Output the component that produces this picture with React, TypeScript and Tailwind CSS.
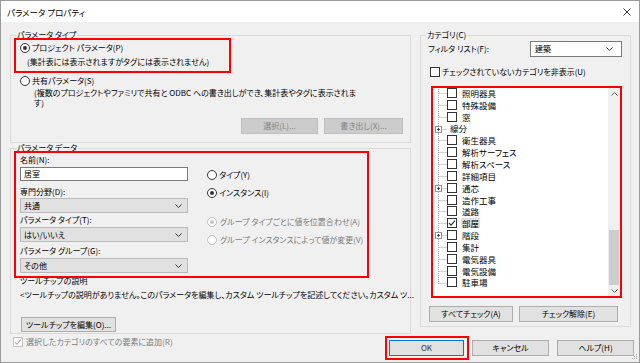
import React from "react";

type Row = { label: string; plus?: boolean; noBox?: boolean; checked?: boolean; last?: boolean };

const categories: Row[] = [
  { label: "照明器具" },
  { label: "特殊設備" },
  { label: "窓" },
  { label: "線分", plus: true, noBox: true },
  { label: "衛生器具" },
  { label: "解析サーフェス" },
  { label: "解析スペース" },
  { label: "詳細項目" },
  { label: "通芯", plus: true },
  { label: "造作工事" },
  { label: "道路" },
  { label: "部屋", checked: true },
  { label: "階段", plus: true },
  { label: "集計" },
  { label: "電気器具" },
  { label: "電気設備" },
  { label: "駐車場", last: true },
];

function Chevron({ up = false, color = "#333333" }: { up?: boolean; color?: string }) {
  return (
    <svg width="7" height="4" viewBox="0 0 7 4" className="shrink-0">
      <path d={up ? "M0.5 3.5L3.5 0.5L6.5 3.5" : "M0.5 0.5L3.5 3.5L6.5 0.5"} fill="none" stroke={color} strokeWidth="1" />
    </svg>
  );
}

function Radio({ checked = false, disabled = false }: { checked?: boolean; disabled?: boolean }) {
  return (
    <span
      className={`flex h-[10px] w-[10px] shrink-0 items-center justify-center rounded-full border bg-white ${
        disabled ? "border-[#c4c4c4]" : "border-[#333333]"
      }`}
    >
      {checked && <span className={`h-[4px] w-[4px] rounded-full ${disabled ? "bg-[#c4c4c4]" : "bg-[#333333]"}`} />}
    </span>
  );
}

function Check({ checked = false, disabled = false }: { checked?: boolean; disabled?: boolean }) {
  return (
    <span
      className={`flex h-[10px] w-[10px] shrink-0 items-center justify-center border bg-white ${
        disabled ? "border-[#c4c4c4]" : "border-[#333333]"
      }`}
    >
      {checked && (
        <svg width="8" height="8" viewBox="0 0 8 8">
          <path d="M1 4.2L3 6.2L7 1.6" fill="none" stroke={disabled ? "#b0b0b0" : "#222222"} strokeWidth="1.1" />
        </svg>
      )}
    </span>
  );
}

function Btn({ children, disabled = false, className = "" }: { children: React.ReactNode; disabled?: boolean; className?: string }) {
  return (
    <div
      className={`flex h-[16px] shrink-0 items-center justify-center border whitespace-nowrap ${
        disabled ? "border-[#bfbfbf] bg-[#cccccc] text-[#838383]" : "border-[#adadad] bg-[#e1e1e1] text-black"
      } ${className}`}
    >
      {children}
    </div>
  );
}

function Select({ value, className = "" }: { value: string; className?: string }) {
  return (
    <div className={`flex h-[15px] w-[168px] items-center justify-between border border-[#bababa] bg-[#e1e1e1] pl-[3px] pr-[5px] ${className}`}>
      <span>{value}</span>
      <Chevron />
    </div>
  );
}

function Branch({ plus, last }: { plus?: boolean; last?: boolean }) {
  return (
    <svg viewBox="0 0 14 12" preserveAspectRatio="none" className="h-full w-[14px] shrink-0">
      <path d={last ? "M5.5 0V6.5" : "M5.5 0V12"} stroke="#a0a0a0" strokeDasharray="1 1" />
      <path d="M5.5 6.5H14" stroke="#a0a0a0" strokeDasharray="1 1" />
      {plus && (
        <g>
          <rect x="2.5" y="3.5" width="6" height="6" fill="#ffffff" stroke="#919191" />
          <path d="M4 6.5H7M5.5 5V8" stroke="#3a3a3a" />
        </g>
      )}
    </svg>
  );
}

export default function App() {
  return (
    <div className="relative flex h-[363px] w-[640px] flex-col border border-[#9b9b9b] bg-[#f0f0f0] text-[8px] leading-[10px] text-black font-['Noto_Sans_CJK_JP','Noto_Sans',sans-serif] [font-feature-settings:'palt']">
      {/* Title bar */}
      <div className="flex h-[21px] shrink-0 items-center justify-between bg-white pl-[6px] pr-[8px]">
        <span className="text-[8.5px]">パラメータ プロパティ</span>
        <svg width="8" height="8" viewBox="0 0 8 8">
          <path d="M0.5 0.5L7.5 7.5M7.5 0.5L0.5 7.5" stroke="#222222" strokeWidth="0.9" />
        </svg>
      </div>

      <div className="flex items-start">
        {/* Left column */}
        <div className="ml-[9px] mt-[8px] flex w-[401px] flex-col">
          <fieldset className="min-w-0 border border-[#d9d9d9] pb-[8px]">
            <legend className="ml-[5px] px-[1px]">パラメータ タイプ</legend>
            <div className="relative z-10 -mt-[2px] ml-[3px] w-[217px] border-2 border-[#ff0000] pb-[4px] pl-[4px] pt-[3px]">
              <div className="flex h-[10px] items-center gap-[2px]">
                <Radio checked />
                <span>プロジェクト パラメータ(P)</span>
              </div>
              <div className="mt-[4px] h-[10px] whitespace-nowrap pl-[7px]">(集計表には表示されますがタグには表示されません)</div>
            </div>
            <div className="mt-[3px] flex h-[10px] items-center gap-[2px] pl-[9px]">
              <Radio />
              <span>共有パラメータ(S)</span>
            </div>
            <div className="mt-[2px] whitespace-nowrap pl-[23px]">
              <div>(複数のプロジェクトやファミリで共有と ODBC への書き出しができ、集計表やタグに表示されま</div>
              <div>す)</div>
            </div>
            <div className="mt-[10px] flex justify-end gap-[6px] pr-[7px]">
              <Btn disabled className="w-[77px]">選択(L)...</Btn>
              <Btn disabled className="w-[79px]">書き出し(X)...</Btn>
            </div>
          </fieldset>

          <fieldset className="min-w-0 border border-[#d9d9d9] pb-[1px]">
            <legend className="ml-[5px] px-[1px]">パラメータ データ</legend>
            <div className="relative z-10 -mt-[2px] ml-[3px] flex w-[355px] border-2 border-[#ff0000] pb-[3px] pl-[4px] pt-[2px]">
              <div className="flex w-[168px] flex-col">
                <div className="h-[10px]">名前(N):</div>
                <div className="mt-[2px] flex h-[14px] items-center border border-[#7a7a7a] bg-white pl-[3px]">居室</div>
                <div className="mt-[6px] h-[10px]">専門分野(D):</div>
                <Select value="共通" className="mt-[1px]" />
                <div className="mt-[2px] h-[10px]">パラメータ タイプ(T):</div>
                <Select value="はい/いいえ" className="mt-[2px]" />
                <div className="mt-[4px] h-[10px]">パラメータ グループ(G):</div>
                <Select value="その他" className="mt-[2px]" />
              </div>
              <div className="ml-[19px] flex flex-col pt-[15px]">
                <div className="flex h-[10px] items-center gap-[2px]">
                  <Radio />
                  <span>タイプ(Y)</span>
                </div>
                <div className="mt-[8px] flex h-[10px] items-center gap-[2px]">
                  <Radio checked />
                  <span>インスタンス(I)</span>
                </div>
                <div className="mt-[19px] flex h-[10px] items-center gap-[3px] text-[#7a7a7a]">
                  <Radio checked disabled />
                  <span>グループ タイプごとに値を位置合わせ(A)</span>
                </div>
                <div className="mt-[8px] flex h-[10px] items-center gap-[3px] text-[#7a7a7a]">
                  <Radio disabled />
                  <span>グループ インスタンスによって値が変更(V)</span>
                </div>
              </div>
            </div>
            <div className="-mt-[2px] h-[10px] pl-[9px]">ツールチップの説明</div>
            <div className="mt-[4px] h-[10px] whitespace-nowrap pl-[9px]">
              &lt;ツールチップの説明がありません。このパラメータを編集し、カスタム ツールチップを記述してください。カスタム ツ...
            </div>
            <Btn className="ml-[10px] mt-[17px] !h-[15px] w-[95px]">ツールチップを編集(O)...</Btn>
          </fieldset>
        </div>

        {/* Right column */}
        <fieldset className="ml-[9px] mt-[8px] w-[211px] min-w-0 border border-[#d9d9d9] pb-[4px]">
          <legend className="ml-[5px] px-[1px]">カテゴリ(C)</legend>
          <div className="mt-[1px] flex h-[16px] items-center pl-[7px] pr-[8px]">
            <span>フィルタ リスト(F):</span>
            <div className="ml-auto flex h-[16px] w-[92px] items-center justify-between border border-[#7a7a7a] bg-white pl-[4px] pr-[8px]">
              <span>建築</span>
              <Chevron />
            </div>
          </div>
          <div className="mt-[10px] flex h-[10px] items-center gap-[2px] pl-[9px]">
            <Check />
            <span>チェックされていないカテゴリを非表示(U)</span>
          </div>
          <div className="ml-[10px] mt-[9px] flex h-[212px] w-[191px] border-2 border-[#ff0000] bg-white">
            <div className="flex flex-1 flex-col overflow-hidden text-[8.5px]">
              {categories.map((c, i) => (
                <div key={c.label} className={`flex h-[11.85px] shrink-0 items-center ${i === 0 ? "-mt-[1px]" : ""}`}>
                  <Branch plus={c.plus} last={c.last} />
                  {c.noBox ? (
                    <span className="ml-[3px]">{c.label}</span>
                  ) : (
                    <>
                      <Check checked={c.checked} />
                      <span className={`ml-[4px] px-[1px] ${c.checked ? "bg-[#e0e0e0]" : ""}`}>{c.label}</span>
                    </>
                  )}
                </div>
              ))}
            </div>
            <div className="flex w-[12px] shrink-0 flex-col bg-[#f0f0f0]">
              <div className="flex h-[11px] items-center justify-center">
                <Chevron up color="#606060" />
              </div>
              <div className="flex flex-1 flex-col justify-end px-[1px]">
                <div className="h-[55px] bg-[#cdcdcd]" />
              </div>
              <div className="flex h-[11px] items-center justify-center">
                <Chevron color="#606060" />
              </div>
            </div>
          </div>
          <div className="mt-[8px] flex gap-[6px] pl-[8px]">
            <Btn className="w-[84px]">すべてチェック(A)</Btn>
            <Btn className="w-[99px]">チェック解除(E)</Btn>
          </div>
        </fieldset>
      </div>

      {/* Bottom row */}
      <div className="flex items-start">
        <div className="ml-[12px] mt-[3px] flex h-[10px] items-center gap-[3px] text-[#7a7a7a]">
          <Check checked disabled />
          <span>選択したカテゴリのすべての要素に追加(R)</span>
        </div>
        <div className="ml-auto mt-[2px] border-2 border-[#ff0000] pb-[2px] pl-[2px] pr-[3px] pt-[2px]">
          <div className="flex h-[16px] w-[75px] items-center justify-center border border-[#0078d7] bg-[#e1e1e1] text-[#333333]">OK</div>
        </div>
        <Btn className="ml-[3px] mt-[6px] w-[77px]">キャンセル</Btn>
        <Btn className="ml-[8px] mr-[5px] mt-[6px] w-[77px]">ヘルプ(H)</Btn>
      </div>

      <svg width="8" height="8" viewBox="0 0 8 8" className="absolute bottom-[1px] right-[1px]">
        <rect x="6" y="1" width="1" height="1" fill="#a0a0a0" />
        <rect x="4" y="3" width="1" height="1" fill="#a0a0a0" />
        <rect x="6" y="3" width="1" height="1" fill="#a0a0a0" />
        <rect x="2" y="5" width="1" height="1" fill="#a0a0a0" />
        <rect x="4" y="5" width="1" height="1" fill="#a0a0a0" />
        <rect x="6" y="5" width="1" height="1" fill="#a0a0a0" />
      </svg>
    </div>
  );
}
